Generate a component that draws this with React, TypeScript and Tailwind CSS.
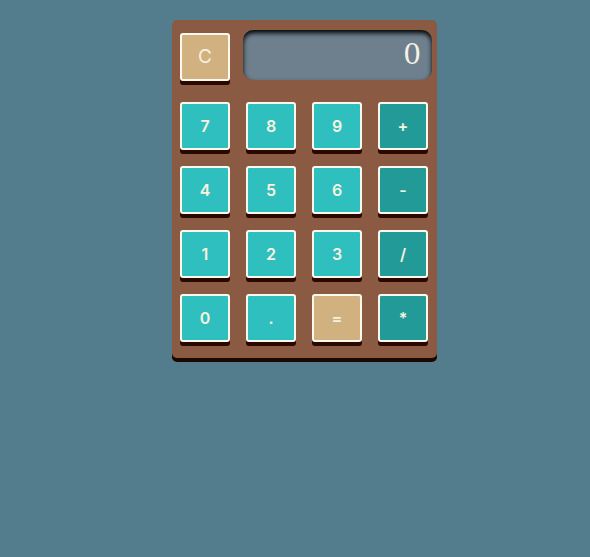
import React from "react";

type Btn = { label: string; kind: "num" | "op" | "eq" };

const rows: Btn[][] = [
  [{ label: "7", kind: "num" }, { label: "8", kind: "num" }, { label: "9", kind: "num" }, { label: "+", kind: "op" }],
  [{ label: "4", kind: "num" }, { label: "5", kind: "num" }, { label: "6", kind: "num" }, { label: "-", kind: "op" }],
  [{ label: "1", kind: "num" }, { label: "2", kind: "num" }, { label: "3", kind: "num" }, { label: "/", kind: "op" }],
  [{ label: "0", kind: "num" }, { label: ".", kind: "num" }, { label: "=", kind: "eq" }, { label: "*", kind: "op" }],
];

function Key({ b }: { b: Btn }) {
  const bg =
    b.kind === "num" ? "bg-[#2ebfbe]" : b.kind === "op" ? "bg-[#229b98]" : "bg-[#d2b180]";
  return (
    <button
      className={`w-[50px] h-[48px] ${bg} border-2 border-[#fdf8ec] rounded-[3px] shadow-[0_4px_0_#2a0800] text-[#f7f2e0] text-[16px] font-semibold flex items-center justify-center`}
      style={{ fontFamily: "Inter, 'Noto Sans', sans-serif" }}
    >
      {b.label}
    </button>
  );
}

export default function App() {
  return (
    <div className="w-[590px] h-[557px] bg-[#537d8d] pt-[20px] pl-[172px]">
      <div className="w-[265px] bg-[#8a5a42] rounded-[5px] shadow-[0_4px_0_#1c0800] pt-[10px] pl-[8px] pr-[9px] pb-[16px]">
        <div className="flex items-start">
          <button
            className="shrink-0 mt-[3px] w-[50px] h-[48px] bg-[#d2b180] border-2 border-[#fdf8ec] rounded-[3px] shadow-[0_4px_0_#2a0800] text-[#f7f2e0] text-[19px] flex items-center justify-center"
            style={{ fontFamily: "Inter, 'Noto Sans', sans-serif" }}
          >
            C
          </button>
          <div
            className="shrink-0 ml-[13px] w-[189px] h-[50px] bg-[#6e7f8d] rounded-[10px] shadow-[inset_0_3px_5px_#000] flex items-center justify-end pr-[11px] text-[#f4f1e6] text-[28px]"
            style={{ fontFamily: "'DejaVu Serif', 'Liberation Serif', serif" }}
          >
            0
          </div>
        </div>
        <div className="mt-[21px] grid grid-cols-[repeat(4,50px)] gap-x-[16px] gap-y-[16px]">
          {rows.flat().map((b, i) => (
            <Key key={i} b={b} />
          ))}
        </div>
      </div>
    </div>
  );
}
